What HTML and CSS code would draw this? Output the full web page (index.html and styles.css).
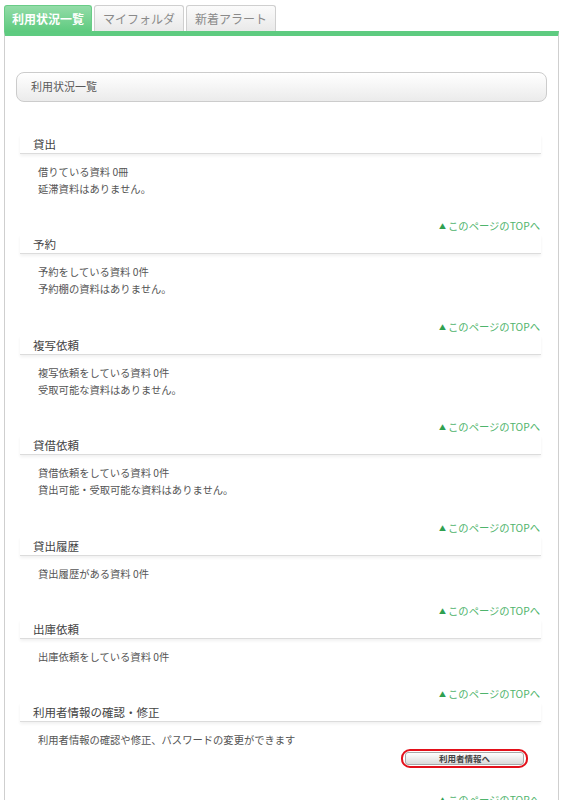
FILE: index.html
```html
<!DOCTYPE html>
<html lang="ja">
<head>
<meta charset="utf-8">
<title>利用状況一覧</title>
<link rel="stylesheet" href="styles.css">
</head>
<body>
<div class="tabs">
  <div class="tab active">利用状況一覧</div>
  <div class="tab">マイフォルダ</div>
  <div class="tab">新着アラート</div>
</div>
<div class="panel">
  <div class="titlebox">利用状況一覧</div>

  <section class="sec">
    <h2 class="sec-head">貸出</h2>
    <div class="sec-body"><p>借りている資料 0冊</p><p>延滞資料はありません。</p></div>
    <div class="top"><a href="#"><span class="tri">▲</span>このページのTOPへ</a></div>
  </section>

  <section class="sec">
    <h2 class="sec-head">予約</h2>
    <div class="sec-body"><p>予約をしている資料 0件</p><p>予約棚の資料はありません。</p></div>
    <div class="top"><a href="#"><span class="tri">▲</span>このページのTOPへ</a></div>
  </section>

  <section class="sec">
    <h2 class="sec-head">複写依頼</h2>
    <div class="sec-body"><p>複写依頼をしている資料 0件</p><p>受取可能な資料はありません。</p></div>
    <div class="top"><a href="#"><span class="tri">▲</span>このページのTOPへ</a></div>
  </section>

  <section class="sec">
    <h2 class="sec-head">貸借依頼</h2>
    <div class="sec-body"><p>貸借依頼をしている資料 0件</p><p>貸出可能・受取可能な資料はありません。</p></div>
    <div class="top"><a href="#"><span class="tri">▲</span>このページのTOPへ</a></div>
  </section>

  <section class="sec">
    <h2 class="sec-head">貸出履歴</h2>
    <div class="sec-body"><p>貸出履歴がある資料 0件</p></div>
    <div class="top"><a href="#"><span class="tri">▲</span>このページのTOPへ</a></div>
  </section>

  <section class="sec">
    <h2 class="sec-head">出庫依頼</h2>
    <div class="sec-body"><p>出庫依頼をしている資料 0件</p></div>
    <div class="top"><a href="#"><span class="tri">▲</span>このページのTOPへ</a></div>
  </section>

  <section class="sec">
    <h2 class="sec-head">利用者情報の確認・修正</h2>
    <div class="sec-body"><p>利用者情報の確認や修正、パスワードの変更ができます</p>
      <div class="btn-row"><span class="mark"><button class="btn">利用者情報へ</button></span></div>
    </div>
    <div class="top"><a href="#"><span class="tri">▲</span>このページのTOPへ</a></div>
  </section>
</div>
</body>
</html>
```

FILE: styles.css
```css
* { box-sizing: border-box; }
html, body { margin: 0; padding: 0; background: #fff; }
body {
  font-family: "Noto Sans CJK JP", "Noto Sans", sans-serif;
  color: #555;
  overflow: hidden;
  height: 800px;
}
.tabs {
  display: flex;
  gap: 2px;
  padding: 5px 0 0 4px;
  height: 31px;
}
.tab {
  width: 90px;
  height: 26px;
  border: 1px solid #cfcfcf;
  border-bottom: none;
  border-radius: 3px 3px 0 0;
  background: linear-gradient(#fbfbfb, #e9e9e9);
  color: #8a8a8a;
  font-size: 12px;
  line-height: 25px;
  text-align: center;
}
.tab.active {
  width: 88px;
  border-color: #6acc87;
  background: linear-gradient(#93dca8, #5dca7e);
  color: #fff;
  font-weight: bold;
  height: 27px;
}
.panel {
  margin-left: 4px;
  width: 555px;
  border-top: 5px solid #5ecb80;
  border-left: 1px solid #cfcfcf;
  border-right: 1px solid #cfcfcf;
  padding: 36px 11px 0 11px;
  min-height: 800px;
}
.titlebox {
  height: 30px;
  border: 1px solid #cccccc;
  border-radius: 8px;
  background: linear-gradient(#ffffff, #ebebeb);
  font-size: 11px;
  line-height: 27px;
  padding-left: 14px;
  color: #5a5a5a;
  margin-bottom: 33px;
}
.sec {
  margin: 0 6px 0 4px;
}
.sec-head {
  margin: 0;
  font-size: 11.5px;
  font-weight: normal;
  line-height: 18px;
  height: 19px;
  color: #444;
  padding-left: 13px;
  border-bottom: 1px solid #dcdcdc;
  box-shadow: 0 2px 3px rgba(0,0,0,0.06);
}
.sec-body {
  padding: 9px 0 0 18px;
  font-size: 10.3px;
  line-height: 17px;
  color: #555;
}
.sec-body p { margin: 0; }
.top {
  margin-top: 20.4px;
  text-align: right;
  padding-right: 1px;
  font-size: 10.3px;
  line-height: 17px;
}
.top a {
  color: #4fb46c;
  text-decoration: none;
}
.tri {
  font-size: 7px;
  color: #2fa050;
  margin-right: 2px;
  vertical-align: 1px;
}
.btn-row {
  text-align: right;
  padding-right: 13px;
  margin-top: 1px;
  height: 21px;
}
.mark {
  display: inline-block;
  border: 2px solid #e3101a;
  border-radius: 9px;
  padding: 1px 2px;
  line-height: 0;
}
.btn {
  width: 119px;
  height: 13px;
  border: 1px solid #a8a8a8;
  border-radius: 3px;
  background: linear-gradient(#ffffff, #d9d9d9);
  font-family: "Noto Sans CJK JP", sans-serif;
  font-size: 8.5px;
  font-weight: bold;
  color: #444;
  line-height: 11px;
  padding: 0;
}
```
